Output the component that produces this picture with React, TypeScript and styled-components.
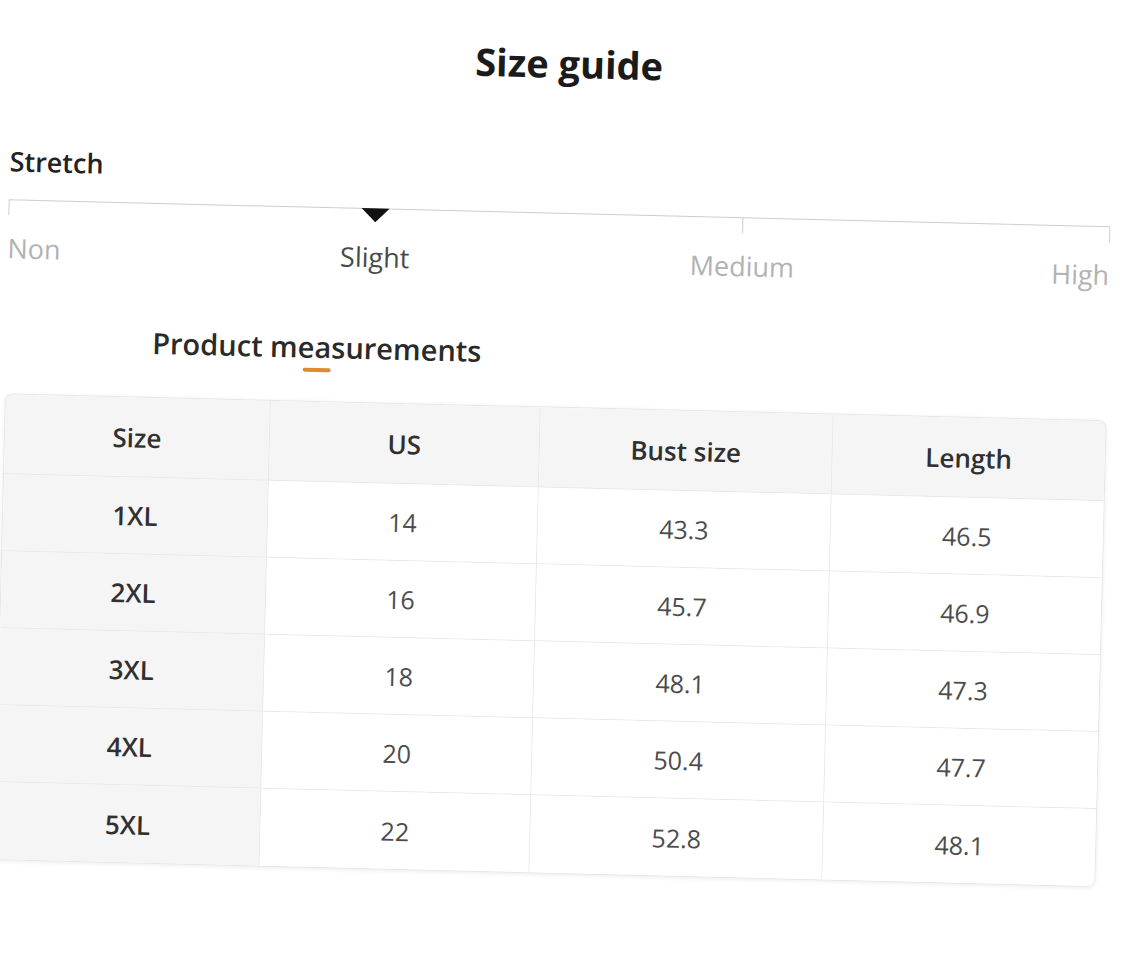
import React from 'react'
import styled, { createGlobalStyle } from 'styled-components'

const GlobalStyle = createGlobalStyle`
  html, body {
    margin: 0;
    padding: 0;
    background: #ffffff;
  }
  body {
    font-family: 'Open Sans', 'Noto Sans', 'Liberation Sans', sans-serif;
  }
`

const Frame = styled.div`
  width: 1128px;
  height: 962px;
  overflow: hidden;
  background: #ffffff;
`

const Sheet = styled.div`
  width: 1128px;
  height: 962px;
  transform: rotate(1.4deg);
  transform-origin: 564px 481px;
  padding: 37px 0 0 2px;
  box-sizing: border-box;
`

const Content = styled.div`
  width: 1102px;
  display: flex;
  flex-direction: column;
`

const Title = styled.h1`
  margin: 0;
  padding-left: 12px;
  text-align: center;
  font-size: 38px;
  font-weight: 700;
  color: #1b1b1b;
  line-height: 52px;
`

const SectionLabel = styled.div`
  margin-top: 67px;
  font-size: 27px;
  font-weight: 600;
  color: #222222;
  line-height: 37px;
`

const Scale = styled.div`
  margin-top: 20px;
  display: flex;
  flex-direction: column;
`

const Track = styled.div`
  height: 15px;
  border-top: 1px solid #cdcdcd;
  display: flex;
  justify-content: space-between;
`

const Tick = styled.div`
  width: 1px;
  height: 15px;
  background: #cdcdcd;
`

const MarkerSlot = styled.div`
  width: 0;
  display: flex;
  justify-content: center;
`

const Marker = styled.div`
  flex: none;
  width: 0;
  height: 0;
  margin-top: -1px;
  border-left: 14px solid transparent;
  border-right: 14px solid transparent;
  border-top: 14px solid #111111;
`

const LabelRow = styled.div`
  margin-top: 14px;
  display: flex;
  justify-content: space-between;
`

const Level = styled.div<{ $align: 'flex-start' | 'center' | 'flex-end'; $active?: boolean }>`
  width: 0;
  display: flex;
  justify-content: ${(p) => p.$align};
  white-space: nowrap;
  font-size: 27px;
  line-height: 37px;
  color: ${(p) => (p.$active ? '#4a4a4a' : '#b2b2b2')};
`

const HeadingWrap = styled.div`
  margin-top: 56px;
  margin-left: 147px;
  align-self: flex-start;
  display: flex;
  flex-direction: column;
  align-items: center;
`

const Heading = styled.div`
  font-size: 29px;
  font-weight: 600;
  color: #2a2a2a;
  line-height: 33px;
`

const Underline = styled.div`
  margin-top: 5px;
  width: 28px;
  height: 4px;
  border-radius: 2px;
  background: #e08a2c;
`

const Table = styled.div`
  margin-top: 29px;
  margin-left: 1px;
  width: 1100px;
  display: grid;
  grid-template-columns: 265px 270px 293px 272px;
  grid-template-rows: 80px repeat(5, 77px);
  border: 1px solid #e6e6e6;
  border-radius: 8px;
  overflow: hidden;
  box-shadow: 0 1px 4px rgba(0, 0, 0, 0.08);
`

const Cell = styled.div<{ $shade?: boolean; $strong?: boolean; $last?: boolean; $bottom?: boolean }>`
  display: flex;
  align-items: center;
  justify-content: center;
  font-size: ${(p) => (p.$strong ? '26px' : '25px')};
  font-weight: ${(p) => (p.$strong ? 600 : 400)};
  color: ${(p) => (p.$strong ? '#303030' : '#4c4c4c')};
  background: ${(p) => (p.$shade ? '#f5f5f5' : '#ffffff')};
  border-right: ${(p) => (p.$last ? 'none' : '1px solid #e8e8e8')};
  border-bottom: ${(p) => (p.$bottom ? 'none' : '1px solid #e8e8e8')};
`

const headers = ['Size', 'US', 'Bust size', 'Length']

const rows = [
  ['1XL', '14', '43.3', '46.5'],
  ['2XL', '16', '45.7', '46.9'],
  ['3XL', '18', '48.1', '47.3'],
  ['4XL', '20', '50.4', '47.7'],
  ['5XL', '22', '52.8', '48.1'],
]

export default function App() {
  return (
    <Frame>
      <GlobalStyle />
      <Sheet>
        <Content>
          <Title>Size guide</Title>
          <SectionLabel>Stretch</SectionLabel>
          <Scale>
            <Track>
              <Tick />
              <MarkerSlot>
                <Marker />
              </MarkerSlot>
              <Tick />
              <Tick />
            </Track>
            <LabelRow>
              <Level $align="flex-start">Non</Level>
              <Level $align="center" $active>
                Slight
              </Level>
              <Level $align="center">Medium</Level>
              <Level $align="flex-end">High</Level>
            </LabelRow>
          </Scale>
          <HeadingWrap>
            <Heading>Product measurements</Heading>
            <Underline />
          </HeadingWrap>
          <Table>
            {headers.map((h, i) => (
              <Cell key={h} $shade $strong $last={i === headers.length - 1}>
                {h}
              </Cell>
            ))}
            {rows.map((r, ri) =>
              r.map((v, ci) => (
                <Cell
                  key={`${ri}-${ci}`}
                  $shade={ci === 0}
                  $strong={ci === 0}
                  $last={ci === r.length - 1}
                  $bottom={ri === rows.length - 1}
                >
                  {v}
                </Cell>
              ))
            )}
          </Table>
        </Content>
      </Sheet>
    </Frame>
  )
}
